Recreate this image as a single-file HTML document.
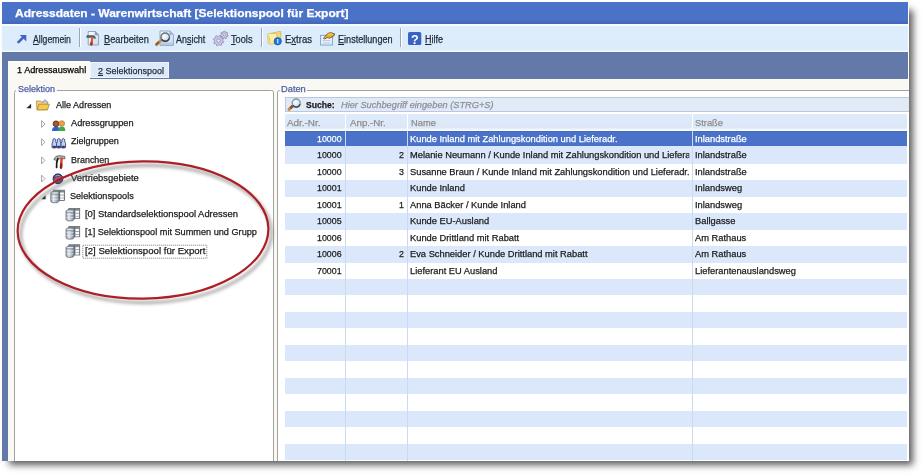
<!DOCTYPE html>
<html><head><meta charset="utf-8"><style>
html,body{margin:0;padding:0;}
body{width:923px;height:475px;overflow:hidden;background:#fff;position:relative;font-family:"Liberation Sans", sans-serif;}
.a{position:absolute;}
.t{position:absolute;white-space:pre;line-height:1.117;transform-origin:0 0;-webkit-text-stroke:0.25px currentColor;font-family:"Liberation Sans", sans-serif;}
.t u{text-decoration:underline;text-underline-offset:1px;}
.shadow{position:absolute;left:5px;top:6px;width:904px;height:455px;box-shadow:4px 4px 7px rgba(0,0,0,0.64);background:#fff;}
.title{left:2px;top:2px;width:906px;height:22px;background:linear-gradient(#4a73c9 0,#4a72c7 80%,#4167bb 100%);}
.toolbar{left:2px;top:24px;width:906px;height:28px;background:linear-gradient(#f6fbff 0,#f6fbff 1.5px,#deedfb 2.5px,#dcecfb 26px,#f4f9fe 27px,#f4f9fe 28px);}
.sep{top:28px;width:1px;height:19px;background:#9aa5b5;box-shadow:1px 0 0 #fff;}
.band{left:2px;top:52px;width:906px;height:409px;background:#6279aa;}
.content{left:8px;top:79px;width:900px;height:382px;background:#faf8f3;}
.tab1{left:8px;top:61.4px;width:82.4px;height:19px;background:linear-gradient(#ffffff 0,#fbfaf6 2px,#faf8f3 100%);}
.tab2{left:90.4px;top:62.4px;width:78.5px;height:16.1px;background:#dde9f8;border:1px solid #eef5fd;box-sizing:border-box;}
.gb{border:1px solid #a6a6a6;border-radius:3px;}
.tree{left:15px;top:92px;width:257px;height:369px;background:#fff;}
.search{left:285px;top:97px;width:626px;height:15px;background:#e2eaf6;border:1px solid #b7c8e0;box-sizing:border-box;}
.hdr{left:285px;top:114px;width:622px;height:16px;background:linear-gradient(#dfeafa 0,#dce8f8 85%,#f5f9fe 100%);}
.grid{left:285px;top:131px;width:622px;height:330px;overflow:hidden;}
.row{position:absolute;left:0;width:622px;height:16.45px;}
.alt{background:#dbe8fb;}
.sel{background:linear-gradient(#3f63b6 0,#4a72c8 1.1px,#4a72c8 14.3px,#3f63b6 15.4px,#dbe8fb 15.5px,#dbe8fb 16.45px);}
.vline{position:absolute;width:1px;background:#c9dbf3;}

.clip{position:absolute;left:0;top:0;width:909px;height:461px;overflow:hidden;}

</style></head><body>
<div class="shadow"></div>
<div class="clip">

<div class="a title"></div>
<div class="a toolbar"></div>
<div class="a sep" style="left:79px"></div>
<div class="a sep" style="left:261px"></div>
<div class="a sep" style="left:400px"></div>
<div class="a band"></div>
<div class="a content"></div>
<div class="a tab1"></div>
<div class="a tab2"></div>
<!-- left group box -->
<div class="a" style="left:14px;top:89.9px;width:260px;height:380px;border:1.4px solid #a4a29e;border-radius:2.5px;box-sizing:border-box;background:#fff;"></div>
<div class="a" style="left:16px;top:84px;width:41px;height:8px;background:#faf8f3;"></div>
<!-- right group box -->
<div class="a" style="left:277px;top:89.9px;width:640px;height:380px;border:1.4px solid #a4a29e;border-radius:2.5px;box-sizing:border-box;background:#fff;"></div>
<div class="a" style="left:279.5px;top:84px;width:27px;height:8px;background:#faf8f3;"></div>
<div class="a search"></div>
<div class="a hdr"></div>
<div class="a" style="left:345px;top:114px;width:1px;height:16px;background:#fff;"></div>
<div class="a" style="left:407px;top:114px;width:1px;height:16px;background:#fff;"></div>
<div class="a" style="left:692px;top:114px;width:1px;height:16px;background:#fff;"></div>
<div class="a grid">
<div class="row sel" style="top:0.00px"></div>
<div class="row alt" style="top:16.45px"></div>
<div class="row " style="top:32.90px"></div>
<div class="row alt" style="top:49.35px"></div>
<div class="row " style="top:65.80px"></div>
<div class="row alt" style="top:82.25px"></div>
<div class="row " style="top:98.70px"></div>
<div class="row alt" style="top:115.15px"></div>
<div class="row " style="top:131.60px"></div>
<div class="row alt" style="top:148.05px"></div>
<div class="row " style="top:164.50px"></div>
<div class="row alt" style="top:180.95px"></div>
<div class="row " style="top:197.40px"></div>
<div class="row alt" style="top:213.85px"></div>
<div class="row " style="top:230.30px"></div>
<div class="row alt" style="top:246.75px"></div>
<div class="row " style="top:263.20px"></div>
<div class="row alt" style="top:279.65px"></div>
<div class="row " style="top:296.10px"></div>
<div class="row alt" style="top:312.55px"></div>
<div class="vline" style="left:60px;top:0;height:330px"></div>
<div class="vline" style="left:122px;top:0;height:330px"></div>
<div class="vline" style="left:407px;top:0;height:330px"></div>
</div>

<div class="t" style="font-size:11px;font-weight:bold;color:#fff;top:6.65px;left:14.60px;transform:scaleX(1.0902)">Adressdaten - Warenwirtschaft [Selektionspool für Export]</div>
<div class="t" style="font-size:10px;color:#1e2a3a;top:33.55px;left:33.10px;transform:scaleX(0.8629)"><u>A</u>llgemein</div>
<div class="t" style="font-size:10px;color:#1e2a3a;top:33.55px;left:103.80px;transform:scaleX(0.9261)"><u>B</u>earbeiten</div>
<div class="t" style="font-size:10px;color:#1e2a3a;top:33.55px;left:175.50px;transform:scaleX(0.8934)">An<u>s</u>icht</div>
<div class="t" style="font-size:10px;color:#1e2a3a;top:33.55px;left:231.00px;transform:scaleX(0.9204)"><u>T</u>ools</div>
<div class="t" style="font-size:10px;color:#1e2a3a;top:33.55px;left:284.90px;transform:scaleX(0.9491)">E<u>x</u>tras</div>
<div class="t" style="font-size:10px;color:#1e2a3a;top:33.55px;left:338.00px;transform:scaleX(0.9093)"><u>E</u>instellungen</div>
<div class="t" style="font-size:10px;color:#1e2a3a;top:33.55px;left:425.00px;transform:scaleX(0.8993)"><u>H</u>ilfe</div>
<div class="t" style="font-size:9.5px;color:#000;top:65.40px;left:16.60px;transform:scaleX(0.9634)">1 Adressauswahl</div>
<div class="t" style="font-size:9.5px;color:#1e2a3a;top:65.70px;left:98.30px;transform:scaleX(0.9452)"><u>2</u> Selektionspool</div>
<div class="t" style="font-size:9.5px;color:#4d5fa6;top:84.40px;left:17.75px;transform:scaleX(0.9477)">Selektion</div>
<div class="t" style="font-size:9.5px;color:#4d5fa6;top:84.40px;left:280.80px;transform:scaleX(0.9779)">Daten</div>
<div class="t" style="font-size:9.5px;color:#1a1a1a;top:99.90px;left:55.75px;transform:scaleX(0.9510)">Alle Adressen</div>
<div class="t" style="font-size:9.5px;color:#1a1a1a;top:118.10px;left:70.60px;transform:scaleX(0.9715)">Adressgruppen</div>
<div class="t" style="font-size:9.5px;color:#1a1a1a;top:136.30px;left:70.60px;transform:scaleX(0.9527)">Zielgruppen</div>
<div class="t" style="font-size:9.5px;color:#1a1a1a;top:154.50px;left:70.60px;transform:scaleX(0.9417)">Branchen</div>
<div class="t" style="font-size:9.5px;color:#1a1a1a;top:172.70px;left:70.60px;transform:scaleX(0.9873)">Vertriebsgebiete</div>
<div class="t" style="font-size:9.5px;color:#1a1a1a;top:190.90px;left:69.60px;transform:scaleX(0.9572)">Selektionspools</div>
<div class="t" style="font-size:9.5px;color:#1a1a1a;top:209.10px;left:84.80px;transform:scaleX(0.9914)">[0] Standardselektionspool Adressen</div>
<div class="t" style="font-size:9.5px;color:#1a1a1a;top:227.30px;left:84.80px;transform:scaleX(0.9631)">[1] Selektionspool mit Summen und Grupp</div>
<div class="t" style="font-size:9.5px;color:#1a1a1a;top:245.50px;left:84.80px;transform:scaleX(1.0141)">[2] Selektionspool für Export</div>
<div class="t" style="font-size:9.5px;font-weight:bold;color:#1a1a1a;top:99.70px;left:305.70px;transform:scaleX(0.9057)">Suche:</div>
<div class="t" style="font-size:9.5px;font-style:italic;color:#8a8f99;top:99.70px;left:340.80px;transform:scaleX(0.9708)">Hier Suchbegriff eingeben (STRG+S)</div>
<div class="t" style="font-size:9.5px;color:#8c8c8c;top:117.60px;left:287.30px;transform:scaleX(1.0372)">Adr.-Nr.</div>
<div class="t" style="font-size:9.5px;color:#8c8c8c;top:117.60px;left:349.50px;transform:scaleX(1.0241)">Anp.-Nr.</div>
<div class="t" style="font-size:9.5px;color:#8c8c8c;top:117.60px;left:411.00px;transform:scaleX(0.9800)">Name</div>
<div class="t" style="font-size:9.5px;color:#8c8c8c;top:117.60px;left:695.00px;transform:scaleX(0.9800)">Straße</div>
<div class="t" style="font-size:9.5px;color:#fff;top:134.00px;left:317.03px;transform:scaleX(0.9300)">10000</div>
<div class="t" style="font-size:9.5px;color:#fff;top:134.00px;left:409.80px;transform:scaleX(0.9800);width:285.41px;overflow:hidden">Kunde Inland mit Zahlungskondition und Lieferadr.</div>
<div class="t" style="font-size:9.5px;color:#fff;top:134.00px;left:695.00px;transform:scaleX(0.9800)">Inlandstraße</div>
<div class="t" style="font-size:9.5px;color:#1a1a1a;top:150.45px;left:317.03px;transform:scaleX(0.9300)">10000</div>
<div class="t" style="font-size:9.5px;color:#1a1a1a;top:150.45px;left:399.07px;transform:scaleX(0.9300)">2</div>
<div class="t" style="font-size:9.5px;color:#1a1a1a;top:150.45px;left:409.80px;transform:scaleX(0.9800);width:285.41px;overflow:hidden">Melanie Neumann / Kunde Inland mit Zahlungskondition und Lieferadr.</div>
<div class="t" style="font-size:9.5px;color:#1a1a1a;top:150.45px;left:695.00px;transform:scaleX(0.9800)">Inlandstraße</div>
<div class="t" style="font-size:9.5px;color:#1a1a1a;top:166.90px;left:317.03px;transform:scaleX(0.9300)">10000</div>
<div class="t" style="font-size:9.5px;color:#1a1a1a;top:166.90px;left:399.07px;transform:scaleX(0.9300)">3</div>
<div class="t" style="font-size:9.5px;color:#1a1a1a;top:166.90px;left:409.80px;transform:scaleX(0.9800);width:285.41px;overflow:hidden">Susanne Braun / Kunde Inland mit Zahlungskondition und Lieferadr.</div>
<div class="t" style="font-size:9.5px;color:#1a1a1a;top:166.90px;left:695.00px;transform:scaleX(0.9800)">Inlandstraße</div>
<div class="t" style="font-size:9.5px;color:#1a1a1a;top:183.35px;left:317.03px;transform:scaleX(0.9300)">10001</div>
<div class="t" style="font-size:9.5px;color:#1a1a1a;top:183.35px;left:409.80px;transform:scaleX(0.9800);width:285.41px;overflow:hidden">Kunde Inland</div>
<div class="t" style="font-size:9.5px;color:#1a1a1a;top:183.35px;left:695.00px;transform:scaleX(0.9800)">Inlandsweg</div>
<div class="t" style="font-size:9.5px;color:#1a1a1a;top:199.80px;left:317.03px;transform:scaleX(0.9300)">10001</div>
<div class="t" style="font-size:9.5px;color:#1a1a1a;top:199.80px;left:399.07px;transform:scaleX(0.9300)">1</div>
<div class="t" style="font-size:9.5px;color:#1a1a1a;top:199.80px;left:409.80px;transform:scaleX(0.9800);width:285.41px;overflow:hidden">Anna Bäcker / Kunde Inland</div>
<div class="t" style="font-size:9.5px;color:#1a1a1a;top:199.80px;left:695.00px;transform:scaleX(0.9800)">Inlandsweg</div>
<div class="t" style="font-size:9.5px;color:#1a1a1a;top:216.25px;left:317.03px;transform:scaleX(0.9300)">10005</div>
<div class="t" style="font-size:9.5px;color:#1a1a1a;top:216.25px;left:409.80px;transform:scaleX(0.9800);width:285.41px;overflow:hidden">Kunde EU-Ausland</div>
<div class="t" style="font-size:9.5px;color:#1a1a1a;top:216.25px;left:695.00px;transform:scaleX(0.9800)">Ballgasse</div>
<div class="t" style="font-size:9.5px;color:#1a1a1a;top:232.70px;left:317.03px;transform:scaleX(0.9300)">10006</div>
<div class="t" style="font-size:9.5px;color:#1a1a1a;top:232.70px;left:409.80px;transform:scaleX(0.9800);width:285.41px;overflow:hidden">Kunde Drittland mit Rabatt</div>
<div class="t" style="font-size:9.5px;color:#1a1a1a;top:232.70px;left:695.00px;transform:scaleX(0.9800)">Am Rathaus</div>
<div class="t" style="font-size:9.5px;color:#1a1a1a;top:249.15px;left:317.03px;transform:scaleX(0.9300)">10006</div>
<div class="t" style="font-size:9.5px;color:#1a1a1a;top:249.15px;left:399.07px;transform:scaleX(0.9300)">2</div>
<div class="t" style="font-size:9.5px;color:#1a1a1a;top:249.15px;left:409.80px;transform:scaleX(0.9800);width:285.41px;overflow:hidden">Eva Schneider / Kunde Drittland mit Rabatt</div>
<div class="t" style="font-size:9.5px;color:#1a1a1a;top:249.15px;left:695.00px;transform:scaleX(0.9800)">Am Rathaus</div>
<div class="t" style="font-size:9.5px;color:#1a1a1a;top:265.60px;left:317.03px;transform:scaleX(0.9300)">70001</div>
<div class="t" style="font-size:9.5px;color:#1a1a1a;top:265.60px;left:409.80px;transform:scaleX(0.9800);width:285.41px;overflow:hidden">Lieferant EU Ausland</div>
<div class="t" style="font-size:9.5px;color:#1a1a1a;top:265.60px;left:695.00px;transform:scaleX(0.9800)">Lieferantenauslandsweg</div>
<svg class="a" style="left:0;top:0" width="909" height="461" viewBox="0 0 909 461">
<defs>
 <linearGradient id="fold" x1="0" y1="0" x2="0" y2="1"><stop offset="0" stop-color="#fff3b0"/><stop offset="1" stop-color="#e9b83a"/></linearGradient>
 <linearGradient id="doc" x1="0" y1="0" x2="1" y2="1"><stop offset="0" stop-color="#ffffff"/><stop offset="1" stop-color="#c9d9ef"/></linearGradient>
 <linearGradient id="cyl" x1="0" y1="0" x2="1" y2="0"><stop offset="0" stop-color="#8f9aa6"/><stop offset="0.35" stop-color="#dfe6ee"/><stop offset="1" stop-color="#7c8794"/></linearGradient>
 <radialGradient id="lens" cx="0.4" cy="0.4" r="0.6"><stop offset="0" stop-color="#ffffff"/><stop offset="1" stop-color="#b9dff2"/></radialGradient>
 <filter id="blur05"><feGaussianBlur stdDeviation="0.35"/></filter>
 <filter id="eshadow" x="-10%" y="-20%" width="120%" height="140%"><feGaussianBlur stdDeviation="1.8"/></filter>
</defs>
<g filter="url(#blur05)">
<!-- Allgemein arrow -->
<path d="M18.5 42.2 L24 36.7" stroke="#3f66c4" stroke-width="2.6" stroke-linecap="round"/>
<path d="M19.8 35 L26.3 35 L26.3 41.5 Z" fill="#3f66c4"/>
<!-- Bearbeiten: doc + hammer -->
<path d="M88.2 31.5 H95.2 L98.6 34.9 V45 H88.2 Z" fill="url(#doc)" stroke="#8e9bb0" stroke-width="0.9"/>
<path d="M95.2 31.5 V34.9 H98.6 Z" fill="#7fa6dc" stroke="#7f93b3" stroke-width="0.6"/>
<path d="M86.8 35.6 H93.2 Q95.6 35.8 95.4 38.6 L94.2 38.2 Q94 37.6 92.8 37.6 H86.8 Z" fill="#5a6660" stroke="#3e4842" stroke-width="0.5"/>
<path d="M91.4 37.6 L93.4 37.6 L92.6 44.2 Q92.2 45.6 91 45.4 Q90 45.1 90.2 44 Z" fill="#e2502c"/>
<path d="M90.3 42.5 L92.8 42.5 L92.6 44.2 Q92.2 45.6 91 45.4 Q90 45.1 90.2 44 Z" fill="#a8261c"/>
<!-- Ansicht: doc + magnifier -->
<path d="M160 31 H169.8 L173.4 34.6 V45.4 H160 Z" fill="url(#doc)" stroke="#8ea2c2" stroke-width="0.9"/>
<path d="M169.8 31 V34.6 H173.4 Z" fill="#9bb8e0" stroke="#8ea2c2" stroke-width="0.5"/>
<path d="M160.5 42.5 H173 V45 H160.5 Z" fill="#b7c9ea"/>
<path d="M156.6 44.6 L160.6 40.8" stroke="#c99a3a" stroke-width="3" stroke-linecap="round"/>
<path d="M156.4 44.2 L158.4 42.3" stroke="#7d5a4a" stroke-width="2" stroke-linecap="round"/>
<circle cx="165.2" cy="37.3" r="4.3" fill="url(#lens)" stroke="#6a737c" stroke-width="1.5"/>
<path d="M161.8 39.5 A4.3 4.3 0 0 0 169.2 38.6" stroke="#3c434a" stroke-width="1.4" fill="none"/>
<!-- Tools: gears -->
<path d="M223.79 41.65 L223.49 42.65 L222.08 42.95 L221.56 43.58 L221.53 45.02 L220.61 45.50 L219.40 44.72 L218.58 44.80 L217.55 45.79 L216.55 45.49 L216.25 44.08 L215.62 43.56 L214.18 43.53 L213.70 42.61 L214.48 41.40 L214.40 40.58 L213.41 39.55 L213.71 38.55 L215.12 38.25 L215.64 37.62 L215.67 36.18 L216.59 35.70 L217.80 36.48 L218.62 36.40 L219.65 35.41 L220.65 35.71 L220.95 37.12 L221.58 37.64 L223.02 37.67 L223.50 38.59 L222.72 39.80 L222.80 40.62 Z" fill="#c9c5e2" stroke="#8985ab" stroke-width="0.8"/>
<circle cx="218.6" cy="40.6" r="1.7" fill="#ecebf6" stroke="#8985ab" stroke-width="0.7"/>
<path d="M228.18 35.39 L228.00 36.24 L226.86 36.56 L226.45 37.10 L226.42 38.28 L225.63 38.67 L224.67 37.98 L224.00 37.99 L223.06 38.70 L222.27 38.33 L222.20 37.15 L221.78 36.63 L220.63 36.33 L220.43 35.48 L221.31 34.70 L221.46 34.04 L220.97 32.97 L221.51 32.28 L222.67 32.48 L223.27 32.18 L223.82 31.13 L224.69 31.12 L225.26 32.16 L225.86 32.44 L227.02 32.21 L227.58 32.88 L227.12 33.97 L227.28 34.63 Z" fill="#c9c5e2" stroke="#8985ab" stroke-width="0.8"/>
<circle cx="224.3" cy="35" r="1.2" fill="#ecebf6" stroke="#8985ab" stroke-width="0.6"/>
<!-- Extras: folder + info -->
<path d="M271 33.2 L276.5 32.4 L277.5 31.6 H280.8 V42.8 L271 43.8 Z" fill="#f3d977" stroke="#c8ae55" stroke-width="0.7"/>
<path d="M267.6 34.8 Q267.3 33.6 268.8 33.6 L275.8 33.4 Q277 33.4 277 34.6 L277.4 43.4 L269.2 44.2 Q268.2 44.3 268.1 43.2 Z" fill="#fbeea6" stroke="#cdb55c" stroke-width="0.7"/>
<path d="M269 36 L270.2 43.2" stroke="#e8c85a" stroke-width="1.1"/>
<circle cx="277.7" cy="41.3" r="3.7" fill="#1d74da" stroke="#1450a8" stroke-width="0.6"/>
<rect x="277.1" y="39" width="1.3" height="4.3" fill="#c8ecff"/>
<!-- Einstellungen -->
<rect x="320.6" y="35.4" width="11.8" height="9.6" fill="#eef4fc" stroke="#7f9fd3" stroke-width="1"/>
<path d="M322.5 40.6 H330.5 M322.5 42.9 H330.5" stroke="#a3badf" stroke-width="0.8"/>
<path d="M323.4 38.4 L327.6 33.6 Q329.5 32.4 331.5 32.8 L334.6 33.8 L333.8 36 L329.5 38.2 L327.2 37.6 L324.6 39 Z" fill="#e8b030" stroke="#4c3810" stroke-width="0.7" stroke-linejoin="round"/>
<path d="M327.8 34.5 Q330 33.5 332.5 34.2" stroke="#f8d878" stroke-width="0.9" fill="none"/>
<!-- Hilfe -->
<rect x="408" y="32" width="13.3" height="13.1" rx="1.6" fill="#3b64c4"/>
<text x="414.7" y="43.6" font-family="Liberation Sans" font-weight="bold" font-size="12.5" fill="#fff" text-anchor="middle">?</text>

<!-- tree arrows -->
<path d="M26.4 108.2 L31.1 108.2 L31.1 103.8 Z" fill="#2b2b2b"/>
<path d="M41.6 120.6 L45 124 L41.6 127.4 Z" fill="none" stroke="#9a9a9a" stroke-width="0.9"/>
<path d="M41.6 138.8 L45 142.2 L41.6 145.6 Z" fill="none" stroke="#9a9a9a" stroke-width="0.9"/>
<path d="M41.6 157 L45 160.4 L41.6 163.8 Z" fill="none" stroke="#9a9a9a" stroke-width="0.9"/>
<path d="M41.6 175.2 L45 178.6 L41.6 182 Z" fill="none" stroke="#9a9a9a" stroke-width="0.9"/>
<path d="M41.4 199.2 L45.6 199.2 L45.6 195.2 Z" fill="#2b2b2b"/>
<!-- folder open -->
<path d="M36.5 101 H40.5 L41.5 102 H47.5 V109.8 H37 Z" fill="#f1d57a" stroke="#a8873a" stroke-width="0.8"/>
<path d="M42 103 L45 99.6 L48.3 103" fill="#c8c0e8" stroke="#8a84b0" stroke-width="0.8"/>
<path d="M37 109.8 L38.8 104.2 H49.3 L47.5 109.8 Z" fill="#f7c94a" stroke="#a8873a" stroke-width="0.8"/>
<!-- people -->
<circle cx="56" cy="123.8" r="2.9" fill="#b0552c" stroke="#3a2a20" stroke-width="0.8"/>
<path d="M52 131 Q52 126.8 56 126.8 Q60 126.8 60 131 Z" fill="#2d63c8"/>
<circle cx="61.8" cy="123.5" r="2.8" fill="#f0a040" stroke="#b07a30" stroke-width="0.7"/>
<path d="M58.2 131 Q58.2 126.6 61.8 126.6 Q65.3 126.6 65.3 131 Z" fill="#3fa84a"/>
<!-- Zielgruppen -->
<path d="M52.099999999999994 147.6 Q51.599999999999994 142.5 52.8 141.8 Q52.3 138.6 54.3 138.5 Q56.3 138.6 55.8 141.8 Q57.0 142.5 56.5 147.6 Q54.3 148.6 52.099999999999994 147.6 Z" fill="#c4cdf2" stroke="#26336e" stroke-width="0.8"/>
<ellipse cx="54.3" cy="146.8" rx="1.9" ry="1.1" fill="#2a3672"/>
<path d="M56.599999999999994 147.6 Q56.099999999999994 142.5 57.3 141.8 Q56.8 138.6 58.8 138.5 Q60.8 138.6 60.3 141.8 Q61.5 142.5 61.0 147.6 Q58.8 148.6 56.599999999999994 147.6 Z" fill="#c4cdf2" stroke="#26336e" stroke-width="0.8"/>
<ellipse cx="58.8" cy="146.8" rx="1.9" ry="1.1" fill="#2a3672"/>
<path d="M61.099999999999994 147.6 Q60.599999999999994 142.5 61.8 141.8 Q61.3 138.6 63.3 138.5 Q65.3 138.6 64.8 141.8 Q66.0 142.5 65.5 147.6 Q63.3 148.6 61.099999999999994 147.6 Z" fill="#c4cdf2" stroke="#26336e" stroke-width="0.8"/>
<ellipse cx="63.3" cy="146.8" rx="1.9" ry="1.1" fill="#2a3672"/>
<!-- Branchen -->
<path d="M53.8 159.5 Q55 155.6 59.5 155.6 L64.8 156.4 L65 158.8 L60.5 158.6 Q57.5 158.6 56.5 160.5 Z" fill="#b4b4b4" stroke="#4a4a4a" stroke-width="0.7"/>
<path d="M57.8 158.8 Q56.2 162 56.6 167.4" stroke="#1c1c1c" stroke-width="1.8" fill="none" stroke-linecap="round"/>
<path d="M61.6 158.6 L61 167.6" stroke="#d8402a" stroke-width="2.4" stroke-linecap="round"/>
<path d="M61.2 164.5 L61 167.6" stroke="#8a2018" stroke-width="2.4" stroke-linecap="round"/>
<!-- Vertriebsgebiete globe -->
<circle cx="58" cy="178.8" r="4.9" fill="#3f5590" stroke="#1e2648" stroke-width="1"/>
<path d="M54 180.5 Q58 176.5 62.2 177.2" stroke="#e84a4a" stroke-width="1.5" fill="none"/>
<path d="M55.5 176.2 Q57.5 175 59.5 175.5" stroke="#a8b8e0" stroke-width="0.9" fill="none"/>
<!-- db icons -->
<g id="db">
<rect x="53.6" y="190.2" width="10.9" height="10.2" fill="#9aa1a8" stroke="#5f666e" stroke-width="0.8"/>
<rect x="53.6" y="190.2" width="10.9" height="1.8" fill="#7d848b"/>
<rect x="60.2" y="192.6" width="3.6" height="2" fill="#fff"/><rect x="60.2" y="195.6" width="3.6" height="2" fill="#fff"/><rect x="60.2" y="198.4" width="3.6" height="1.6" fill="#fff"/>
<path d="M59.4 190.2 V200.4" stroke="#5e656c" stroke-width="1"/>
<path d="M50.8 193 Q50.8 191.6 54.8 191.6 Q58.8 191.6 58.8 193 V201.4 Q58.8 202.8 54.8 202.8 Q50.8 202.8 50.8 201.4 Z" fill="url(#cyl)" stroke="#667079" stroke-width="0.8"/>
<path d="M51.2 196 Q54.8 197.2 58.4 196 M51.2 199 Q54.8 200.2 58.4 199" stroke="#f2f5f8" stroke-width="0.6" fill="none"/>
<ellipse cx="54.8" cy="193" rx="3.9" ry="1.2" fill="#e8ecf0" stroke="#667079" stroke-width="0.6"/>
</g>
<use href="#db" transform="translate(15.2 18.2)"/>
<use href="#db" transform="translate(15.2 36.4)"/>
<use href="#db" transform="translate(15.2 54.6)"/>
<!-- search magnifier -->
<path d="M289 109.4 L292.4 106.2" stroke="#d98b3c" stroke-width="3.2" stroke-linecap="round"/>
<path d="M291 107.6 L292.6 106.1" stroke="#7a4a52" stroke-width="2.4" stroke-linecap="round"/>
<circle cx="296.2" cy="103" r="4" fill="url(#lens)" stroke="#8a939c" stroke-width="1.3"/>
<path d="M293 105.4 A4 4 0 0 0 300.1 104.2" stroke="#3a4148" stroke-width="1.3" fill="none"/>
</g>
<!-- focus rect -->
<rect x="82.8" y="245.2" width="124" height="13" fill="none" stroke="#555" stroke-width="0.8" stroke-dasharray="1 1"/>
<!-- red ellipse with shadow -->
<ellipse cx="146" cy="234" rx="125.4" ry="68.6" transform="rotate(-0.6 146 234)" fill="none" stroke="#707070" stroke-opacity="0.5" stroke-width="3.6" filter="url(#eshadow)" />
<ellipse cx="143" cy="230" rx="125.4" ry="68.6" transform="rotate(-0.6 143 230)" fill="none" stroke="#ad1f26" stroke-width="2.2"/>
</svg>

</div>
</body></html>
